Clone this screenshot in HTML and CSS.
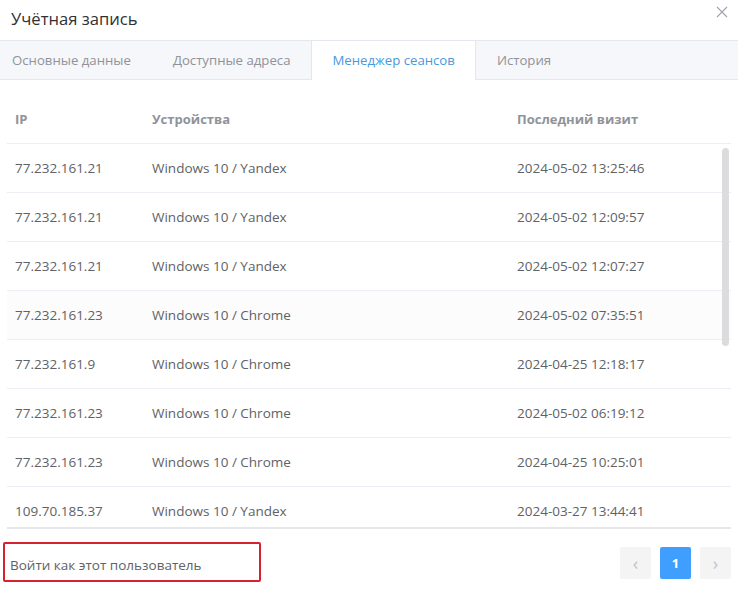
FILE: index.html
```html
<!DOCTYPE html>
<html lang="ru">
<head>
  <meta charset="UTF-8" />
  <title>Учётная запись</title>
  <link rel="stylesheet" href="styles.css">
</head>
<body>
<div class="dialog">
  <div class="dialog-header">
    <span class="dialog-title">Учётная запись</span>
    <button class="close-btn" aria-label="Закрыть">
      <svg width="12" height="12" viewBox="0 0 12 12"><path d="M1 1L11 11M11 1L1 11" stroke="#a0a3aa" stroke-width="1.1" fill="none"/></svg>
    </button>
  </div>
  <div class="tabs">
    <div class="tab first">Основные данные</div>
    <div class="tab">Доступные адреса</div>
    <div class="tab active">Менеджер сеансов</div>
    <div class="tab">История</div>
  </div>
  <div class="tab-body">
    <div class="table">
      <div class="row head">
        <div class="cell c-ip">IP</div>
        <div class="cell c-dev">Устройства</div>
        <div class="cell c-date">Последний визит</div>
      </div>
      <div class="table-body">
        <div class="row"><div class="cell c-ip">77.232.161.21</div><div class="cell c-dev">Windows 10 / Yandex</div><div class="cell c-date">2024-05-02 13:25:46</div></div>
        <div class="row"><div class="cell c-ip">77.232.161.21</div><div class="cell c-dev">Windows 10 / Yandex</div><div class="cell c-date">2024-05-02 12:09:57</div></div>
        <div class="row"><div class="cell c-ip">77.232.161.21</div><div class="cell c-dev">Windows 10 / Yandex</div><div class="cell c-date">2024-05-02 12:07:27</div></div>
        <div class="row hover"><div class="cell c-ip">77.232.161.23</div><div class="cell c-dev">Windows 10 / Chrome</div><div class="cell c-date">2024-05-02 07:35:51</div></div>
        <div class="row"><div class="cell c-ip">77.232.161.9</div><div class="cell c-dev">Windows 10 / Chrome</div><div class="cell c-date">2024-04-25 12:18:17</div></div>
        <div class="row"><div class="cell c-ip">77.232.161.23</div><div class="cell c-dev">Windows 10 / Chrome</div><div class="cell c-date">2024-05-02 06:19:12</div></div>
        <div class="row"><div class="cell c-ip">77.232.161.23</div><div class="cell c-dev">Windows 10 / Chrome</div><div class="cell c-date">2024-04-25 10:25:01</div></div>
        <div class="row"><div class="cell c-ip">109.70.185.37</div><div class="cell c-dev">Windows 10 / Yandex</div><div class="cell c-date">2024-03-27 13:44:41</div></div>
        <div class="scroll-thumb"></div>
      </div>
    </div>
    <div class="footer">
      <div class="login-as">Войти как этот пользователь</div>
      <div class="pager">
        <button class="page-btn nav">&lsaquo;</button>
        <button class="page-btn current">1</button>
        <button class="page-btn nav">&rsaquo;</button>
      </div>
    </div>
  </div>
</div>
</body>
</html>
```

FILE: styles.css
```css
body {
  margin: 0;
  background: #fff;
  font-family: "Open Sans", "Noto Sans", sans-serif;
  color: #606266;
}
.dialog {
  width: 738px;
  height: 599px;
  background: #fff;
}
.dialog-header {
  height: 40px;
  display: flex;
  align-items: center;
  justify-content: space-between;
  padding: 0 10px 4px 11px;
  box-sizing: border-box;
}
.dialog-title {
  font-size: 16.6px;
  color: #303133;
}
.close-btn {
  border: none;
  background: none;
  padding: 0;
  margin-top: -12px;
  width: 12px;
  height: 12px;
  display: flex;
}
.tabs {
  display: flex;
  height: 38px;
  background: #f5f7fa;
  border-top: 1px solid #e4e7ed;
  border-bottom: 1px solid #e4e7ed;
}
.tab {
  padding: 0 20px;
  font-size: 13.2px;
  line-height: 38px;
  color: #909399;
  border-left: 1px solid transparent;
  border-right: 1px solid transparent;
}
.tab.first {
  padding-left: 11px;
}
.tab.active {
  background: #fff;
  color: #4a98e0;
  border-color: #e4e7ed;
  margin-bottom: -1px;
  height: 39px;
}
.tab-body {
  padding: 15px 7px 0 7px;
}
.table {
  border-bottom: 2px solid #e6e7ea;
}
.row {
  display: flex;
  height: 48px;
  align-items: center;
  border-bottom: 1px solid #ebeef5;
  font-size: 13.5px;
}
.row.head {
  font-size: 13px;
  font-weight: bold;
  color: #909399;
}
.row.hover {
  background: #fcfcfc;
}
.cell {
  padding-left: 8px;
  box-sizing: border-box;
}
.c-ip {
  width: 137px;
}
.c-dev {
  width: 365px;
}
.c-date {
  flex: 1;
}
.table-body {
  position: relative;
  height: 383px;
  overflow: hidden;
}
.scroll-thumb {
  position: absolute;
  top: 4px;
  left: 715px;
  width: 7px;
  height: 198px;
  border-radius: 4px;
  background: #dcdcdf;
}
.footer {
  display: flex;
  justify-content: space-between;
  align-items: center;
  margin: 13px -4px 0 -4px;
}
.login-as {
  width: 258px;
  height: 40px;
  box-sizing: border-box;
  border: 2px solid #d6212f;
  border-radius: 2px;
  padding: 12px 5px 0 5px;
  font-size: 13.5px;
  color: #606266;
}
.pager {
  display: flex;
  gap: 9px;
  margin-right: 4px;
  margin-top: 1px;
}
.page-btn {
  width: 31px;
  height: 32px;
  border: none;
  border-radius: 2px;
  background: #f4f4f5;
  color: #c0c4cc;
  font-family: "Open Sans", sans-serif;
  font-size: 18px;
  padding: 0;
}
.page-btn.current {
  background: #409eff;
  color: #fff;
  font-size: 13px;
  font-weight: bold;
}
```
